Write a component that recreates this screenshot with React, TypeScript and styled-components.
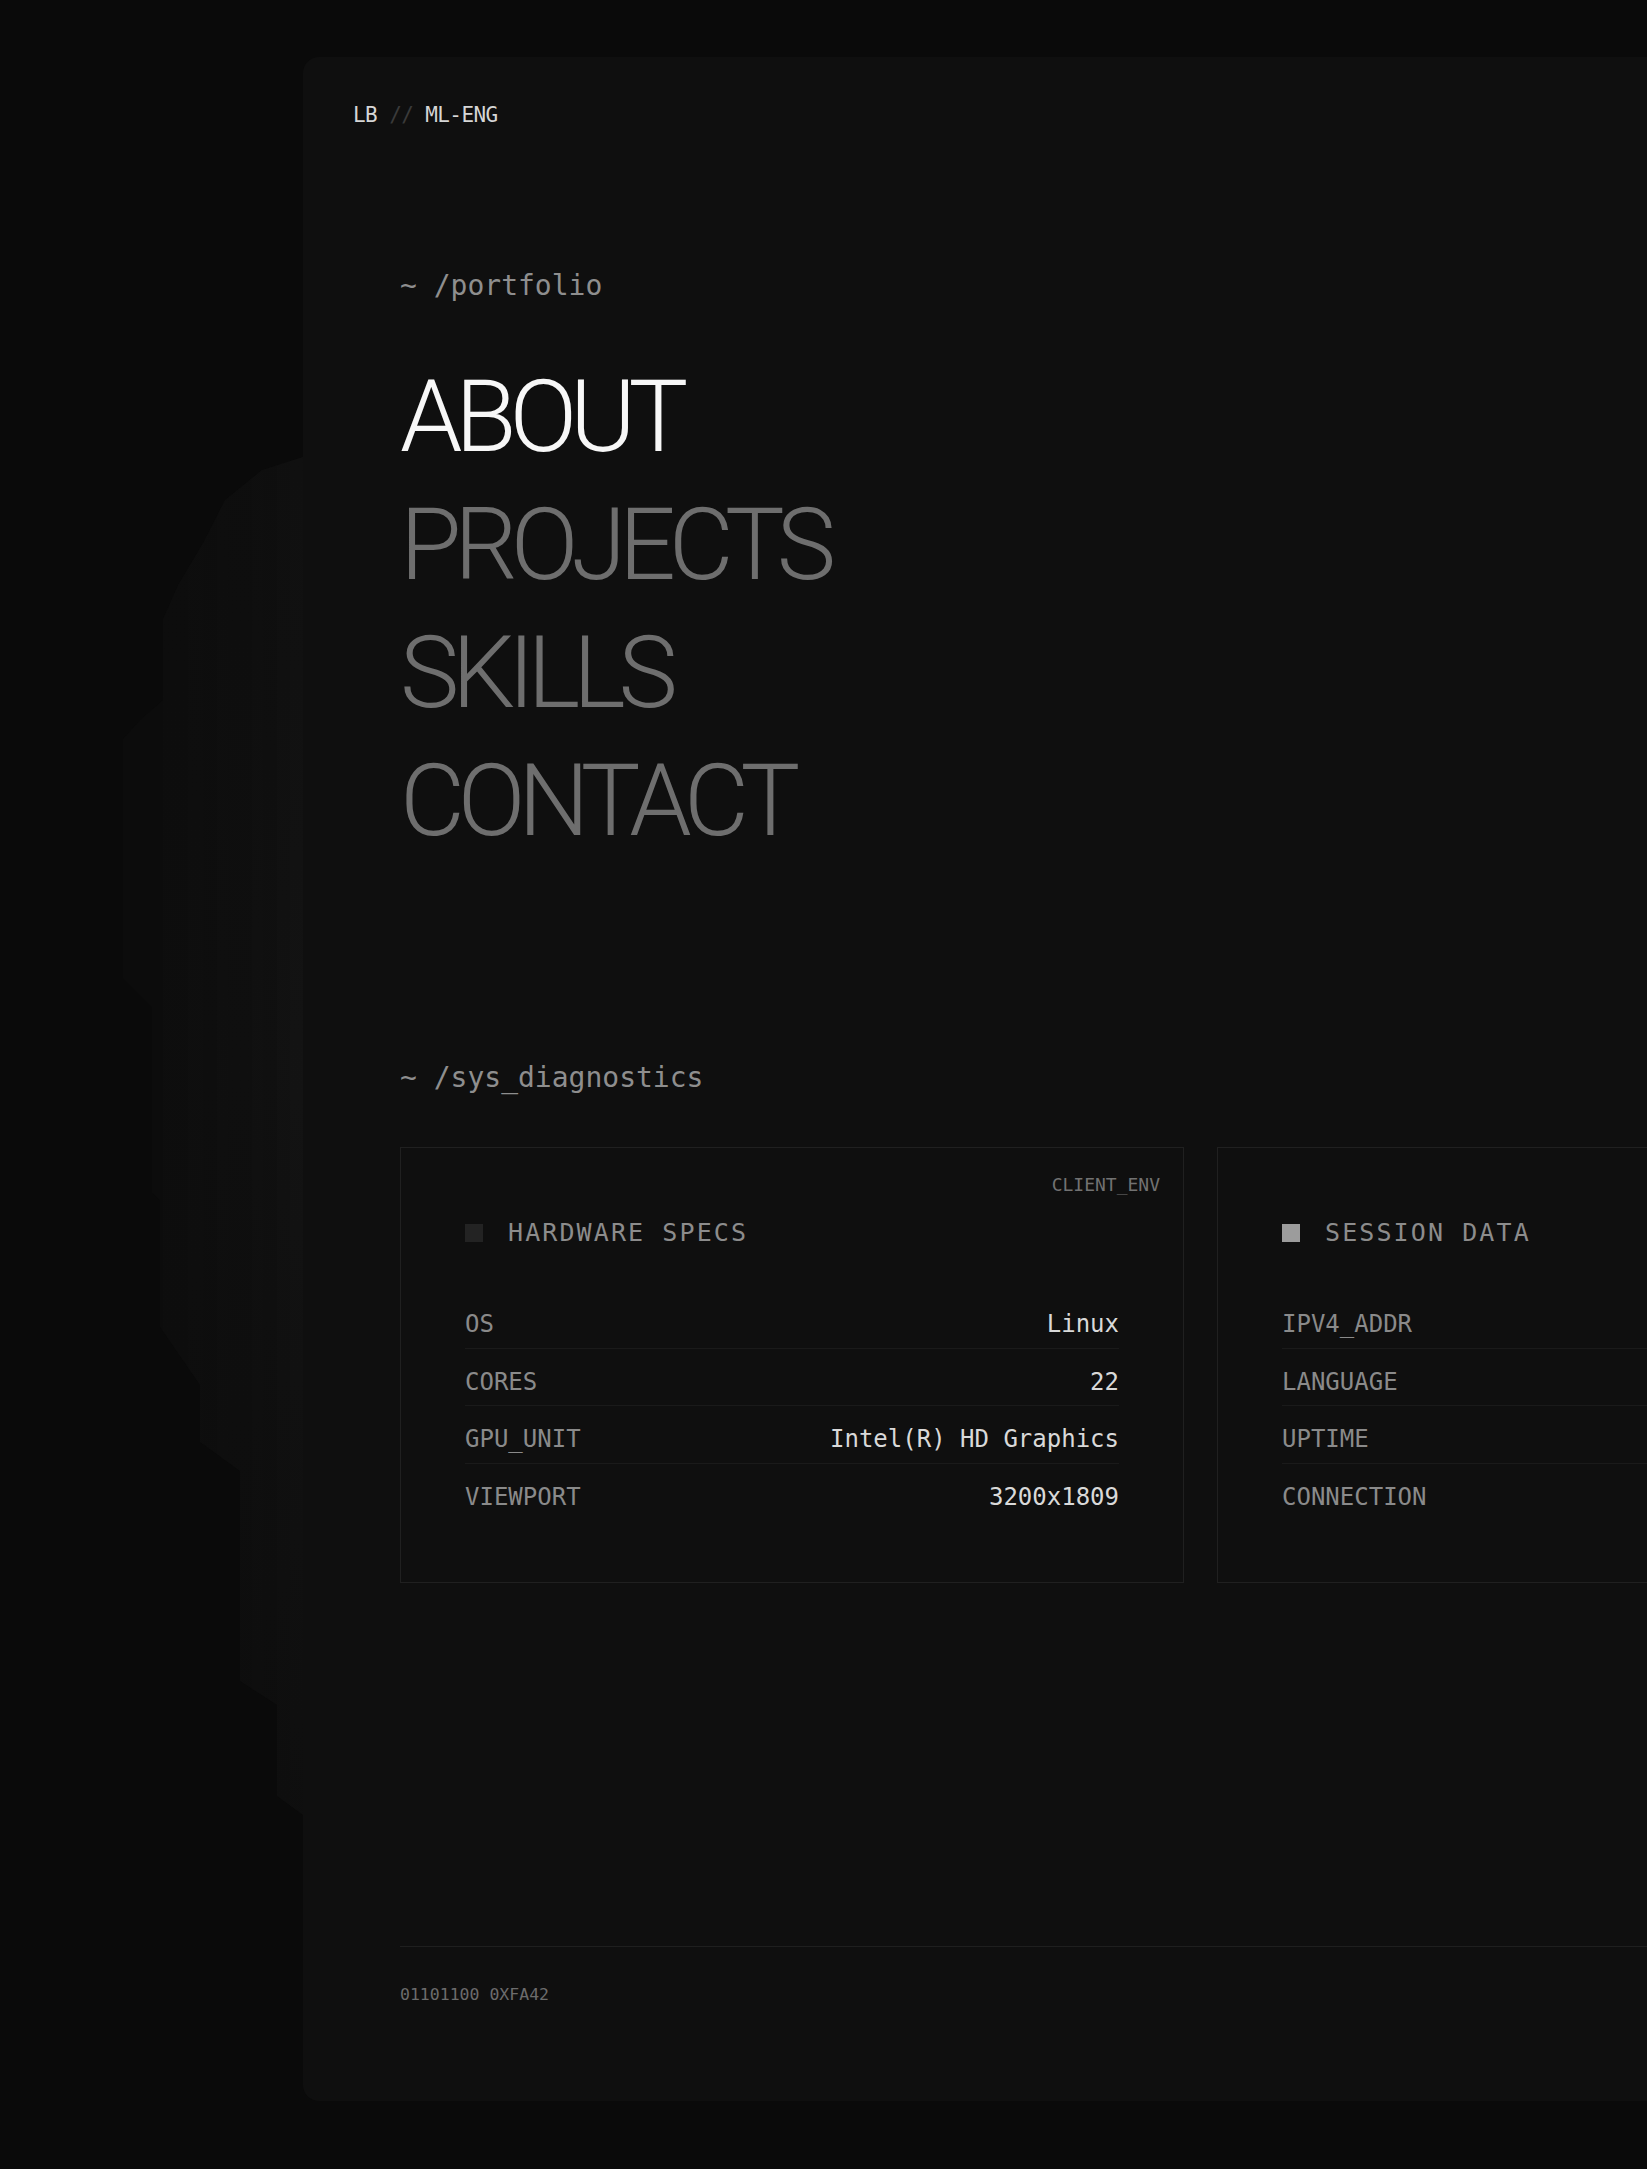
import styled, { createGlobalStyle } from "styled-components";

const GlobalStyle = createGlobalStyle`
  html, body {
    margin: 0;
    padding: 0;
    background: #0a0a0a;
  }
  body {
    overflow: hidden;
  }
  * {
    box-sizing: border-box;
  }
`;

const MONO = `"DejaVu Sans Mono", "Liberation Mono", monospace`;

const Stage = styled.div`
  position: relative;
  width: 100%;
  height: 2169px;
  overflow: hidden;
  display: flex;
  padding: 57px 0 0 303px;
`;

const Silhouette = styled.svg`
  position: absolute;
  left: 0;
  top: 0;
  width: 320px;
  height: 2169px;
  pointer-events: none;
`;

const Panel = styled.div`
  position: relative;
  z-index: 1;
  flex-shrink: 0;
  width: 1795px;
  height: 2044px;
  background: #0f0f0f;
  border-radius: 16px;
  padding: 46px 0 0 50px;
  display: flex;
  flex-direction: column;
`;

const Brand = styled.div`
  font-family: ${MONO};
  font-size: 21px;
  line-height: 24px;
  letter-spacing: -0.6px;
  color: #d6d6d6;
  white-space: pre;
`;

const Slash = styled.span`
  color: #3a3a3a;
`;

const Main = styled.main`
  display: flex;
  flex-direction: column;
  padding-left: 47px;
`;

const PathLabel = styled.div<{ $top: number }>`
  margin-top: ${(p) => p.$top}px;
  font-family: ${MONO};
  font-size: 28px;
  line-height: 33px;
  color: #8e8e8e;
  white-space: pre;
`;

const Nav = styled.nav`
  display: flex;
  flex-direction: column;
  margin-top: 51px;
`;

const NavItem = styled.a<{ $active?: boolean }>`
  font-family: Roboto, "Liberation Sans", sans-serif;
  font-weight: 300;
  font-size: 100px;
  line-height: 128px;
  letter-spacing: -0.072em;
  color: ${(p) => (p.$active ? "#f7f7f7" : "#6e6e6e")};
  text-decoration: none;
  width: max-content;
`;

const CardGrid = styled.div`
  display: grid;
  grid-template-columns: repeat(2, 784px);
  gap: 33px;
  margin-top: 53px;
`;

const Card = styled.section`
  position: relative;
  border: 1px solid #202020;
  padding: 70px 64px 62px;
`;

const Tag = styled.span`
  position: absolute;
  top: 26px;
  right: 23px;
  font-family: ${MONO};
  font-size: 18px;
  line-height: 21px;
  color: #727272;
`;

const CardHead = styled.h3`
  margin: 0;
  display: flex;
  align-items: center;
  gap: 25px;
  font-family: ${MONO};
  font-weight: 400;
  font-size: 25px;
  line-height: 29px;
  letter-spacing: 2.1px;
  color: #8c8c8c;
`;

const Indicator = styled.span<{ $on?: boolean }>`
  width: 18px;
  height: 18px;
  flex-shrink: 0;
  background: ${(p) => (p.$on ? "#9c9c9c" : "#232323")};
`;

const Rows = styled.dl`
  margin: 44px 0 0;
  display: flex;
  flex-direction: column;
`;

const Row = styled.div`
  display: flex;
  justify-content: space-between;
  padding: 19px 0 9.5px;
  border-bottom: 1px solid #1a1a1a;
  font-family: ${MONO};
  font-size: 24px;
  line-height: 28px;

  &:last-child {
    border-bottom: none;
  }
`;

const Key = styled.dt`
  color: #8a8a8a;
`;

const Value = styled.dd`
  margin: 0;
  color: #d9d9d9;
  white-space: pre;
`;

const Footer = styled.footer`
  margin-top: 363px;
  margin-right: 97px;
  border-top: 1px solid #1f1f1f;
  padding-top: 38px;
  font-family: ${MONO};
  font-size: 16.5px;
  line-height: 19px;
  color: #6c6c6c;
`;

type Spec = { key: string; value?: string };

const hardware: Spec[] = [
  { key: "OS", value: "Linux" },
  { key: "CORES", value: "22" },
  { key: "GPU_UNIT", value: "Intel(R) HD Graphics" },
  { key: "VIEWPORT", value: "3200x1809" },
];

const session: Spec[] = [
  { key: "IPV4_ADDR" },
  { key: "LANGUAGE" },
  { key: "UPTIME" },
  { key: "CONNECTION" },
];

const navLinks = ["ABOUT", "PROJECTS", "SKILLS", "CONTACT"];

// faint pixel-column profile that sits behind the left edge of the panel
const outline =
  "303,457 262,470 225,500 203,543 178,585 163,619 163,700 140,720 123,739 123,978 152,1007 152,1193 160,1200 160,1327 200,1385 200,1442 240,1471 240,1681 277,1705 277,1796 303,1815";

const stripes = [
  { x: 123, w: 40, o: 0.0 },
  { x: 163, w: 25, o: 0.2 },
  { x: 188, w: 15, o: 0.35 },
  { x: 203, w: 14, o: 0.28 },
  { x: 217, w: 11, o: 0.45 },
  { x: 228, w: 24, o: 0.42 },
  { x: 252, w: 11, o: 0.62 },
  { x: 263, w: 14, o: 0.55 },
  { x: 277, w: 13, o: 0.8 },
  { x: 290, w: 13, o: 1 },
];

function Backdrop() {
  return (
    <Silhouette viewBox="0 0 320 2169" aria-hidden>
      <defs>
        <clipPath id="head">
          <polygon points={outline} />
        </clipPath>
        <linearGradient id="fade" x1="0" y1="0" x2="0" y2="1">
          <stop offset="0" stopColor="#141414" stopOpacity="0.6" />
          <stop offset="0.45" stopColor="#151515" stopOpacity="1" />
          <stop offset="1" stopColor="#121212" stopOpacity="0.5" />
        </linearGradient>
      </defs>
      <polygon points={outline} fill="#0c0c0c" />
      <g clipPath="url(#head)">
        {stripes.map((s) => (
          <rect key={s.x} x={s.x} y={440} width={s.w} height={1400} fill="url(#fade)" opacity={s.o * 0.8} />
        ))}
      </g>
    </Silhouette>
  );
}

function SpecCard({ title, rows, on, tag }: { title: string; rows: Spec[]; on?: boolean; tag?: string }) {
  return (
    <Card>
      {tag && <Tag>{tag}</Tag>}
      <CardHead>
        <Indicator $on={on} />
        {title}
      </CardHead>
      <Rows>
        {rows.map((r) => (
          <Row key={r.key}>
            <Key>{r.key}</Key>
            {r.value && <Value>{r.value}</Value>}
          </Row>
        ))}
      </Rows>
    </Card>
  );
}

export default function App() {
  return (
    <Stage>
      <GlobalStyle />
      <Backdrop />
      <Panel>
        <Brand>
          LB <Slash>//</Slash> ML-ENG
        </Brand>
        <Main>
          <PathLabel $top={142}>~ /portfolio</PathLabel>
          <Nav>
            {navLinks.map((l, i) => (
              <NavItem key={l} href={`#${l.toLowerCase()}`} $active={i === 0}>
                {l}
              </NavItem>
            ))}
          </Nav>
          <PathLabel $top={196}>~ /sys_diagnostics</PathLabel>
          <CardGrid>
            <SpecCard title="HARDWARE SPECS" rows={hardware} tag="CLIENT_ENV" />
            <SpecCard title="SESSION DATA" rows={session} on />
          </CardGrid>
          <Footer>01101100 0XFA42</Footer>
        </Main>
      </Panel>
    </Stage>
  );
}
